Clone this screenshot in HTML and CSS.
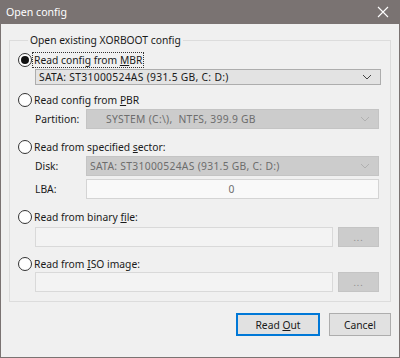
FILE: index.html
```html
<!DOCTYPE html>
<html>
<head>
<meta charset="utf-8">
<link rel="stylesheet" href="styles.css">
</head>
<body>
<div class="window">
  <div class="titlebar">
    <span class="title">Open config</span>
    <svg class="close" width="12" height="12" viewBox="0 0 12 12"><path d="M1 1 L11 11 M11 1 L1 11" stroke="#ffffff" stroke-width="1.1" fill="none"/></svg>
  </div>
  <div class="content">
    <fieldset class="group">
      <legend>Open existing XORBOOT config</legend>

      <label class="radio r1"><span class="dot checked"></span><span class="lbl focus">Read config from <u>M</u>BR</span></label>
      <div class="combo c1"><span>SATA: ST31000524AS (931.5 GB, C: D:)</span><svg class="arrow" width="10" height="6" viewBox="0 0 10 6"><path d="M1 1 L5 5 L9 1" stroke="#444" stroke-width="1" fill="none"/></svg></div>

      <label class="radio r2"><span class="dot"></span><span class="lbl">Read config from <u>P</u>BR</span></label>
      <div class="field f-part"><span class="flabel">Partition:</span><div class="combo dis"><span class="ptext">SYSTEM (C:\),&nbsp; NTFS, 399.9 GB</span><svg class="arrow" width="10" height="6" viewBox="0 0 10 6"><path d="M1 1 L5 5 L9 1" stroke="#b0b0b0" stroke-width="1" fill="none"/></svg></div></div>

      <label class="radio r3"><span class="dot"></span><span class="lbl">Read from specified <u>s</u>ector:</span></label>
      <div class="field f-disk"><span class="flabel">Disk:</span><div class="combo dis"><span>SATA: ST31000524AS (931.5 GB, C: D:)</span><svg class="arrow" width="10" height="6" viewBox="0 0 10 6"><path d="M1 1 L5 5 L9 1" stroke="#b0b0b0" stroke-width="1" fill="none"/></svg></div></div>
      <div class="field f-lba"><span class="flabel">LBA:</span><div class="textbox lba">0</div></div>

      <label class="radio r4"><span class="dot"></span><span class="lbl">Read from binary <u>f</u>ile:</span></label>
      <div class="filerow fr1"><div class="textbox file"></div><div class="browse">...</div></div>

      <label class="radio r5"><span class="dot"></span><span class="lbl">Read from <u>I</u>SO image:</span></label>
      <div class="filerow fr2"><div class="textbox file"></div><div class="browse">...</div></div>
    </fieldset>
    <div class="buttons">
      <button class="btn primary">Read <u>O</u>ut</button>
      <button class="btn cancel">Cancel</button>
    </div>
  </div>
</div>
</body>
</html>
```
FILE: styles.css
```css
* { box-sizing: border-box; }
html, body { margin: 0; padding: 0; }
body {
  width: 400px;
  height: 358px;
  background: #f0f0f0;
  font-family: "Noto Sans", "Open Sans", sans-serif;
  font-size: 10.3px;
  color: #1a1a1a;
  overflow: hidden;
}
.window {
  width: 400px;
  height: 358px;
  border: 1px solid #7a7372;
  border-top: none;
  display: flex;
  flex-direction: column;
  background: #f0f0f0;
}
.titlebar {
  height: 24px;
  background: #7a7372;
  color: #fff;
  display: flex;
  align-items: center;
  justify-content: space-between;
  padding: 0 10px 0 5px;
  font-size: 10.6px;
}
.close { display: block; }
.content {
  padding: 8px 8px 0 8px;
  display: flex;
  flex-direction: column;
}
.group {
  margin: 0;
  padding: 4px 9px 9px 8px;
  border: 1px solid #dcdcdc;
  display: flex;
  flex-direction: column;
  min-width: 0;
}
.group legend {
  padding: 0 2px;
  margin-left: 10px;
  line-height: 16px;
  color: #1a1a1a;
}
.radio {
  display: flex;
  align-items: center;
  height: 16px;
}
.dot {
  width: 14px;
  height: 14px;
  border: 1px solid #333;
  border-radius: 50%;
  background: #fff;
  display: flex;
  align-items: center;
  justify-content: center;
  margin-right: 1px;
  flex: none;
}
.dot.checked::after {
  content: "";
  width: 8px;
  height: 8px;
  border-radius: 50%;
  background: #111;
}
.lbl { padding: 0 1px; line-height: 14px; }
.lbl.focus { outline: 1px dotted #333; }
u { text-decoration: underline; text-underline-offset: 1px; }

.combo {
  height: 20px;
  display: flex;
  align-items: center;
  justify-content: space-between;
  padding: 0 8px 0 3px;
  background: #e3e3e3;
  border: 1px solid #adadad;
  flex: 1;
  letter-spacing: 0.3px;
}
.c1 { margin: 1px 0 0 17px; }
.combo.dis {
  background: #cccccc;
  border-color: #c4c4c4;
  color: #6d6d6d;
}
.ptext { padding-left: 16px; }

.r2 { margin-top: 7px; }
.r3 { margin-top: 10px; }
.r4 { margin-top: 10px; }
.r5 { margin-top: 9px; }

.field {
  display: flex;
  align-items: center;
  margin-left: 17px;
  margin-right: 2px;
}
.f-part { margin-top: 1px; }
.f-disk { margin-top: 1px; }
.f-lba { margin-top: 3px; }
.flabel {
  width: 51px;
  flex: none;
  color: #1a1a1a;
}
.textbox {
  height: 20px;
  border: 1px solid #d4d4d4;
  background: #f9f9f9;
  flex: 1;
}
.lba {
  display: flex;
  align-items: center;
  justify-content: center;
  color: #6d6d6d;
  padding-right: 2px;
}
.filerow {
  display: flex;
  gap: 5px;
  margin-left: 17px;
  margin-right: 2px;
  margin-top: 2px;
}
.fr2 { margin-top: 0; }
.file { background: #f3f3f3; border-color: #d9d9d9; }
.browse {
  width: 41px;
  height: 20px;
  background: #cccccc;
  border: 1px solid #c4c4c4;
  color: #8a8a8a;
  display: flex;
  align-items: center;
  justify-content: center;
  font-size: 9px;
  letter-spacing: 1px;
  line-height: 1;
}
.buttons {
  display: flex;
  justify-content: flex-end;
  gap: 9px;
  margin-top: 11px;
}
.btn {
  height: 23px;
  font-family: inherit;
  font-size: 10.3px;
  color: #1a1a1a;
  background: #e1e1e1;
  border: 1px solid #adadad;
  padding: 0;
  margin: 0;
}
.primary { width: 84px; border: 2px solid #0078d7; }
.cancel { width: 62px; }
```
